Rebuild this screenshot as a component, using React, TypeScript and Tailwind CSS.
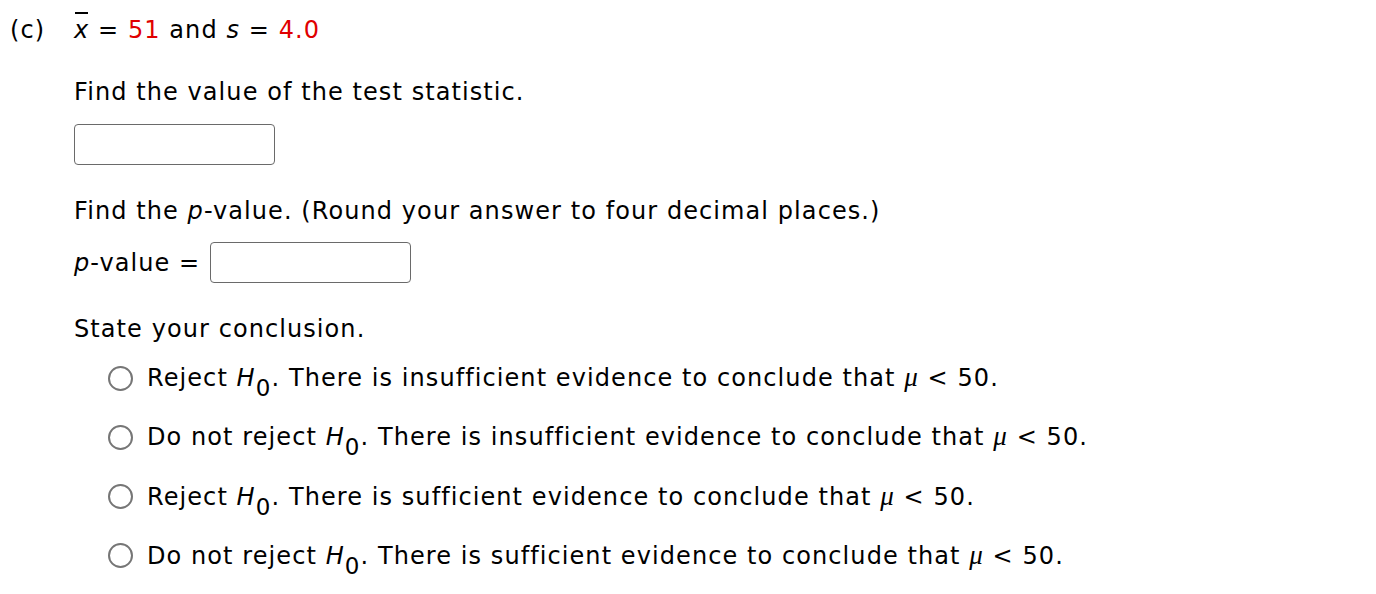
import React from 'react';

const OPTIONS = [
  { verb: 'Reject', evidence: 'insufficient' },
  { verb: 'Do not reject', evidence: 'insufficient' },
  { verb: 'Reject', evidence: 'sufficient' },
  { verb: 'Do not reject', evidence: 'sufficient' },
];

function H0() {
  return (
    <>
      <i>H</i>
      <span className="relative top-[10px] text-[23px] leading-none">0</span>
    </>
  );
}

function Mu() {
  return <i className="font-['Liberation_Serif',serif] text-[27px] leading-none">μ</i>;
}

export default function App() {
  return (
    <div className="min-h-screen bg-white text-black font-['DejaVu_Sans',Verdana,sans-serif] text-[24px] leading-[30px] tracking-[1.08px] pt-[15px] pl-[10px]">
      {/* Part header */}
      <div className="flex">
        <span className="w-[64px]">(c)</span>
        <span>
          <span className="relative inline-block">
            <i>x</i>
            <span className="absolute left-[1px] top-[-3px] w-[13px] h-[2px] bg-black" />
          </span>{' '}
          = <span className="text-[#e00000]">51</span> and <i>s</i> ={' '}
          <span className="text-[#e00000]">4.0</span>
        </span>
      </div>

      <div className="ml-[64px]">
        <p className="mt-[32px]">Find the value of the test statistic.</p>
        <input
          type="text"
          className="mt-[17px] block w-[201px] h-[41px] border border-[#6a6a6a] rounded-[4px] outline-none"
        />

        <p className="mt-[31px]">
          Find the <i>p</i>-value. (Round your answer to four decimal places.)
        </p>
        <div className="mt-[16px] flex items-center gap-[10px]">
          <span>
            <i>p</i>-value =
          </span>
          <input
            type="text"
            className="block w-[201px] h-[41px] border border-[#6a6a6a] rounded-[4px] outline-none"
          />
        </div>

        <p className="mt-[31px]">State your conclusion.</p>
        <div className="mt-[19px] ml-[34px] flex flex-col gap-[29.3px]">
          {OPTIONS.map((opt, idx) => (
            <label key={idx} className="flex items-center gap-[14px] h-[30px]">
              <span className="w-[25px] h-[25px] rounded-full border-2 border-[#767676] bg-white shrink-0" />
              <span>
                {opt.verb} <H0 />. There is {opt.evidence} evidence to conclude that <Mu /> &lt; 50.
              </span>
            </label>
          ))}
        </div>
      </div>
    </div>
  );
}
